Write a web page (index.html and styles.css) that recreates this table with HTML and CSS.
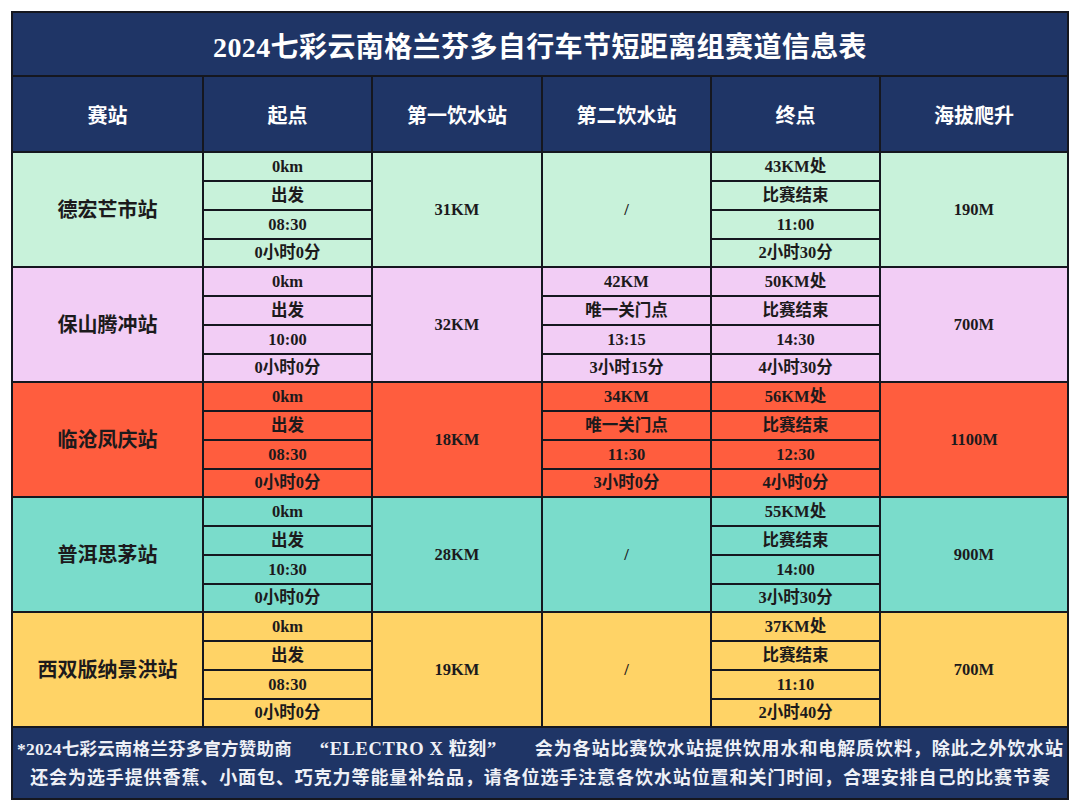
FILE: index.html
```html
<!DOCTYPE html>
<html lang="zh">
<head>
<meta charset="utf-8">
<title>2024七彩云南格兰芬多自行车节短距离组赛道信息表</title>
<link rel="stylesheet" href="styles.css">
</head>
<body>
<div class="sheet">
  <div class="title">2024七彩云南格兰芬多自行车节短距离组赛道信息表</div>

  <div class="head">赛站</div>
  <div class="head">起点</div>
  <div class="head">第一饮水站</div>
  <div class="head">第二饮水站</div>
  <div class="head">终点</div>
  <div class="head">海拔爬升</div>

  <!-- 德宏芒市站 -->
  <div class="c green name">德宏芒市站</div>
  <div class="c green">0km</div>
  <div class="c green span">31KM</div>
  <div class="c green span">/</div>
  <div class="c green">43KM处</div>
  <div class="c green span">190M</div>
  <div class="c green">出发</div>
  <div class="c green">比赛结束</div>
  <div class="c green">08:30</div>
  <div class="c green">11:00</div>
  <div class="c green">0小时0分</div>
  <div class="c green">2小时30分</div>

  <!-- 保山腾冲站 -->
  <div class="c pink name">保山腾冲站</div>
  <div class="c pink">0km</div>
  <div class="c pink span">32KM</div>
  <div class="c pink">42KM</div>
  <div class="c pink">50KM处</div>
  <div class="c pink span">700M</div>
  <div class="c pink">出发</div>
  <div class="c pink">唯一关门点</div>
  <div class="c pink">比赛结束</div>
  <div class="c pink">10:00</div>
  <div class="c pink">13:15</div>
  <div class="c pink">14:30</div>
  <div class="c pink">0小时0分</div>
  <div class="c pink">3小时15分</div>
  <div class="c pink">4小时30分</div>

  <!-- 临沧凤庆站 -->
  <div class="c red name">临沧凤庆站</div>
  <div class="c red">0km</div>
  <div class="c red span">18KM</div>
  <div class="c red">34KM</div>
  <div class="c red">56KM处</div>
  <div class="c red span">1100M</div>
  <div class="c red">出发</div>
  <div class="c red">唯一关门点</div>
  <div class="c red">比赛结束</div>
  <div class="c red">08:30</div>
  <div class="c red">11:30</div>
  <div class="c red">12:30</div>
  <div class="c red">0小时0分</div>
  <div class="c red">3小时0分</div>
  <div class="c red">4小时0分</div>

  <!-- 普洱思茅站 -->
  <div class="c teal name">普洱思茅站</div>
  <div class="c teal">0km</div>
  <div class="c teal span">28KM</div>
  <div class="c teal span">/</div>
  <div class="c teal">55KM处</div>
  <div class="c teal span">900M</div>
  <div class="c teal">出发</div>
  <div class="c teal">比赛结束</div>
  <div class="c teal">10:30</div>
  <div class="c teal">14:00</div>
  <div class="c teal">0小时0分</div>
  <div class="c teal">3小时30分</div>

  <!-- 西双版纳景洪站 -->
  <div class="c yellow name">西双版纳景洪站</div>
  <div class="c yellow">0km</div>
  <div class="c yellow span">19KM</div>
  <div class="c yellow span">/</div>
  <div class="c yellow">37KM处</div>
  <div class="c yellow span">700M</div>
  <div class="c yellow">出发</div>
  <div class="c yellow">比赛结束</div>
  <div class="c yellow">08:30</div>
  <div class="c yellow">11:10</div>
  <div class="c yellow">0小时0分</div>
  <div class="c yellow">2小时40分</div>

  <div class="note">
    <p class="line1">
      <span class="seg-a">*2024七彩云南格兰芬多官方赞助商</span>
      <span class="seg-b">“ELECTRO X 粒刻”</span>
      <span class="seg-c">会为各站比赛饮水站提供饮用水和电解质饮料，除此之外饮水站</span>
    </p>
    <p class="line2">还会为选手提供香蕉、小面包、巧克力等能量补给品，请各位选手注意各饮水站位置和关门时间，合理安排自己的比赛节奏</p>
  </div>
</div>
</body>
</html>
```

FILE: styles.css
```css
* { box-sizing: border-box; margin: 0; padding: 0; }

html, body {
  background: #ffffff;
}

body {
  padding: 11px 11px 0 11px;
  font-family: "Liberation Serif", "Noto Sans CJK SC", serif;
  font-weight: 700;
  color: #1c1a1c;
}

.sheet {
  width: 1058px;
  display: grid;
  grid-template-columns: 189px 167px 168px 167px 167px 186px;
  grid-template-rows: 62px 74px repeat(5, 27px 27px 27px 26px) 70px;
  gap: 2px;
  padding: 2px;
  background: #15171f;
}

.title {
  grid-column: 1 / -1;
  background: #1f3566;
  color: #ffffff;
  font-size: 28px;
  display: flex;
  align-items: center;
  justify-content: center;
  letter-spacing: 0.4px;
  padding-top: 2px;
}

.head {
  background: #1f3566;
  color: #ffffff;
  font-size: 20px;
  display: flex;
  align-items: center;
  justify-content: center;
}

.c {
  display: flex;
  align-items: center;
  justify-content: center;
  font-size: 16.5px;
  line-height: 1;
  padding-top: 1px;
}

.name {
  grid-column: 1;
  grid-row: span 4;
  font-size: 20px;
}

.span {
  grid-row: span 4;
}

.green  { background: #c8f2da; }
.pink   { background: #f2cdf5; }
.red    { background: #ff5d3e; }
.teal   { background: #7adccb; }
.yellow { background: #ffd366; }

.note {
  grid-column: 1 / -1;
  background: #1f3566;
  color: #eef0f6;
  display: flex;
  flex-direction: column;
  justify-content: center;
  gap: 8px;
  padding: 2px 3px 0 4px;
}

.note p {
  white-space: nowrap;
  line-height: 21px;
}

.line1 {
  display: flex;
  justify-content: space-between;
  align-items: baseline;
}

.seg-a {
  font-size: 17.5px;
  letter-spacing: 0.2px;
}

.seg-b {
  font-size: 18.5px;
  letter-spacing: 0.6px;
  margin-right: 10px;
}

.seg-c {
  font-size: 18px;
  letter-spacing: 0.9px;
}

.line2 {
  text-align: center;
  font-size: 18px;
  letter-spacing: 0.9px;
}
```
